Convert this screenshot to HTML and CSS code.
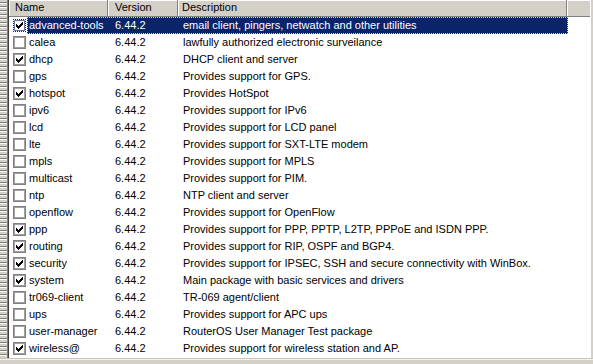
FILE: index.html
```html
<!DOCTYPE html>
<html>
<head>
<meta charset="utf-8">
<link rel="stylesheet" href="styles.css">
</head>
<body>
<div class="window">
  <div class="main">
    <div class="grip"></div>
    <div class="list">
      <div class="header">
        <div class="hcell h-name">Name</div>
        <div class="hcell h-ver">Version</div>
        <div class="hcell h-desc">Description</div>
        <div class="hcell h-fill"></div>
      </div>
      <div class="rows">
        <div class="row selected"><span class="cb"><svg class="tick" width="7" height="7" viewBox="0 0 7 7"><path d="M6 0h1v3h-1v1h-1v1h-1v1h-1v1h-1v-1h-1v-1h-1v-3h1v1h1v1h1v-1h1v-1h1z"/></svg></span><div class="cells"><span class="c-name">advanced-tools</span><span class="c-ver">6.44.2</span><span class="c-desc">email client, pingers, netwatch and other utilities</span></div></div>
        <div class="row"><span class="cb"></span><div class="cells"><span class="c-name">calea</span><span class="c-ver">6.44.2</span><span class="c-desc">lawfully authorized electronic surveilance</span></div></div>
        <div class="row"><span class="cb"><svg class="tick" width="7" height="7" viewBox="0 0 7 7"><path d="M6 0h1v3h-1v1h-1v1h-1v1h-1v1h-1v-1h-1v-1h-1v-3h1v1h1v1h1v-1h1v-1h1z"/></svg></span><div class="cells"><span class="c-name">dhcp</span><span class="c-ver">6.44.2</span><span class="c-desc">DHCP client and server</span></div></div>
        <div class="row"><span class="cb"></span><div class="cells"><span class="c-name">gps</span><span class="c-ver">6.44.2</span><span class="c-desc">Provides support for GPS.</span></div></div>
        <div class="row"><span class="cb"><svg class="tick" width="7" height="7" viewBox="0 0 7 7"><path d="M6 0h1v3h-1v1h-1v1h-1v1h-1v1h-1v-1h-1v-1h-1v-3h1v1h1v1h1v-1h1v-1h1z"/></svg></span><div class="cells"><span class="c-name">hotspot</span><span class="c-ver">6.44.2</span><span class="c-desc">Provides HotSpot</span></div></div>
        <div class="row"><span class="cb"></span><div class="cells"><span class="c-name">ipv6</span><span class="c-ver">6.44.2</span><span class="c-desc">Provides support for IPv6</span></div></div>
        <div class="row"><span class="cb"></span><div class="cells"><span class="c-name">lcd</span><span class="c-ver">6.44.2</span><span class="c-desc">Provides support for LCD panel</span></div></div>
        <div class="row"><span class="cb"></span><div class="cells"><span class="c-name">lte</span><span class="c-ver">6.44.2</span><span class="c-desc">Provides support for SXT-LTE modem</span></div></div>
        <div class="row"><span class="cb"></span><div class="cells"><span class="c-name">mpls</span><span class="c-ver">6.44.2</span><span class="c-desc">Provides support for MPLS</span></div></div>
        <div class="row"><span class="cb"></span><div class="cells"><span class="c-name">multicast</span><span class="c-ver">6.44.2</span><span class="c-desc">Provides support for PIM.</span></div></div>
        <div class="row"><span class="cb"></span><div class="cells"><span class="c-name">ntp</span><span class="c-ver">6.44.2</span><span class="c-desc">NTP client and server</span></div></div>
        <div class="row"><span class="cb"></span><div class="cells"><span class="c-name">openflow</span><span class="c-ver">6.44.2</span><span class="c-desc">Provides support for OpenFlow</span></div></div>
        <div class="row"><span class="cb"><svg class="tick" width="7" height="7" viewBox="0 0 7 7"><path d="M6 0h1v3h-1v1h-1v1h-1v1h-1v1h-1v-1h-1v-1h-1v-3h1v1h1v1h1v-1h1v-1h1z"/></svg></span><div class="cells"><span class="c-name">ppp</span><span class="c-ver">6.44.2</span><span class="c-desc">Provides support for PPP, PPTP, L2TP, PPPoE and ISDN PPP.</span></div></div>
        <div class="row"><span class="cb"><svg class="tick" width="7" height="7" viewBox="0 0 7 7"><path d="M6 0h1v3h-1v1h-1v1h-1v1h-1v1h-1v-1h-1v-1h-1v-3h1v1h1v1h1v-1h1v-1h1z"/></svg></span><div class="cells"><span class="c-name">routing</span><span class="c-ver">6.44.2</span><span class="c-desc">Provides support for RIP, OSPF and BGP4.</span></div></div>
        <div class="row"><span class="cb"><svg class="tick" width="7" height="7" viewBox="0 0 7 7"><path d="M6 0h1v3h-1v1h-1v1h-1v1h-1v1h-1v-1h-1v-1h-1v-3h1v1h1v1h1v-1h1v-1h1z"/></svg></span><div class="cells"><span class="c-name">security</span><span class="c-ver">6.44.2</span><span class="c-desc">Provides support for IPSEC, SSH and secure connectivity with WinBox.</span></div></div>
        <div class="row"><span class="cb"><svg class="tick" width="7" height="7" viewBox="0 0 7 7"><path d="M6 0h1v3h-1v1h-1v1h-1v1h-1v1h-1v-1h-1v-1h-1v-3h1v1h1v1h1v-1h1v-1h1z"/></svg></span><div class="cells"><span class="c-name">system</span><span class="c-ver">6.44.2</span><span class="c-desc">Main package with basic services and drivers</span></div></div>
        <div class="row"><span class="cb"></span><div class="cells"><span class="c-name">tr069-client</span><span class="c-ver">6.44.2</span><span class="c-desc">TR-069 agent/client</span></div></div>
        <div class="row"><span class="cb"></span><div class="cells"><span class="c-name">ups</span><span class="c-ver">6.44.2</span><span class="c-desc">Provides support for APC ups</span></div></div>
        <div class="row"><span class="cb"></span><div class="cells"><span class="c-name">user-manager</span><span class="c-ver">6.44.2</span><span class="c-desc">RouterOS User Manager Test package</span></div></div>
        <div class="row"><span class="cb"><svg class="tick" width="7" height="7" viewBox="0 0 7 7"><path d="M6 0h1v3h-1v1h-1v1h-1v1h-1v1h-1v-1h-1v-1h-1v-3h1v1h1v1h1v-1h1v-1h1z"/></svg></span><div class="cells"><span class="c-name">wireless@</span><span class="c-ver">6.44.2</span><span class="c-desc">Provides support for wireless station and AP.</span></div></div>
      </div>
    </div>
  </div>
  <div class="bottom"></div>
</div>
</body>
</html>
```
FILE: styles.css
```css
html, body {
  margin: 0;
  padding: 0;
  background: #d4d0c8;
}
.window {
  width: 593px;
  height: 364px;
  display: flex;
  flex-direction: column;
  font-family: "Liberation Sans", Arial, sans-serif;
  font-size: 11px;
  color: #000;
  overflow: hidden;
}
.main {
  display: flex;
  height: 358px;
}
.grip {
  width: 7px;
  border-right: 1px solid #808080;
  background: repeating-linear-gradient(to bottom, #d4d0c8 0, #d4d0c8 2px, #808080 2px, #808080 3px, #ffffff 3px, #ffffff 4px);
}
.list {
  width: 582px;
  background: #fff;
  border-left: 1px solid #404040;
  border-right: 1px solid #d4d0c8;
  display: flex;
  flex-direction: column;
}
.header {
  display: grid;
  grid-template-columns: 99px 70px 389px 23px;
  height: 17px;
}
.hcell {
  box-sizing: border-box;
  background: #d4d0c8;
  border-right: 1px solid #808080;
  border-bottom: 1px solid #808080;
  box-shadow: inset 1px 1px 0 #fff;
  line-height: 15px;
  white-space: nowrap;
  overflow: hidden;
}
.h-name { padding-left: 6px; }
.h-ver { padding-left: 7px; }
.h-desc { padding-left: 4px; }
.h-fill { border-right: none; }
.rows {
  display: flex;
  flex-direction: column;
}
.row {
  display: flex;
  align-items: center;
  height: 17px;
}
.cb {
  box-sizing: border-box;
  width: 13px;
  height: 13px;
  margin-left: 4px;
  margin-right: 1px;
  border: 1px solid #808080;
  box-shadow: inset 0 0 0 1px #a0a0a0;
  background: #fff;
  display: flex;
  align-items: center;
  justify-content: center;
  flex: none;
}
.tick {
  display: block;
  fill: #000;
  shape-rendering: crispEdges;
}
.selected .cb {
  border: 1px dotted #0a246a;
  box-shadow: inset 0 0 0 1px #6a78a8;
}
.cells {
  display: grid;
  grid-template-columns: 81px 70px 390px;
  height: 17px;
  line-height: 17px;
  white-space: nowrap;
}
.cells span {
  overflow: hidden;
}
.c-name { padding-left: 2px; }
.c-ver { padding-left: 7px; }
.c-desc { padding-left: 5px; }
.selected .cells {
  background: #0a246a;
  color: #fff;
  outline: 1px dotted #e8dca0;
  outline-offset: -1px;
}
.bottom {
  flex: 1;
  border-top: 1px solid #c8c4bc;
  box-shadow: inset 0 1px 0 #f4f2ee;
  background: #d4d0c8;
}
```
